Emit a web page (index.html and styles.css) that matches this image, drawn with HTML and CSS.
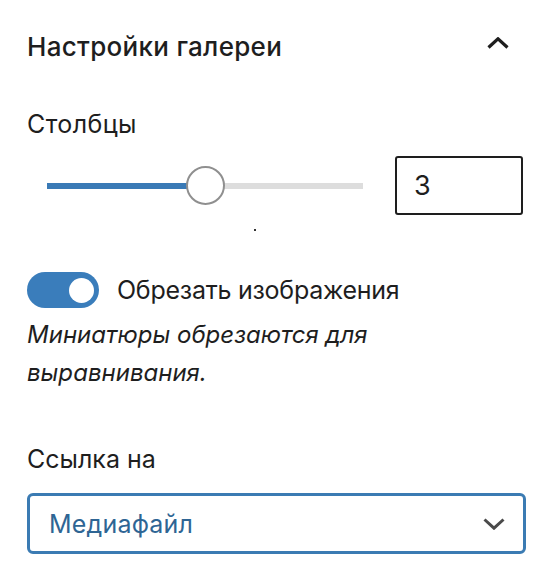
FILE: index.html
```html
<!DOCTYPE html>
<html lang="ru">
<head>
<meta charset="utf-8">
<link rel="stylesheet" href="styles.css">
</head>
<body>
<div class="panel">
  <div class="header">
    <div class="title">Настройки галереи</div>
    <svg class="chev-up" width="22" height="12" viewBox="0 0 22 12"><polyline points="1.5,10.5 11,1.8 20.5,10.5" fill="none" stroke="#1e1e1e" stroke-width="3.2"/></svg>
  </div>
  <div class="label cols-label">Столбцы</div>
  <div class="range-row">
    <div class="range">
      <div class="track">
        <div class="fill" style="width: 50%"></div>
        <div class="thumb" style="left: 50%"></div>
      </div>
      <div class="tick"></div>
    </div>
    <div class="num">3</div>
  </div>
  <div class="toggle-row">
    <div class="toggle"><div class="knob"></div></div>
    <div class="label toggle-label">Обрезать изображения</div>
  </div>
  <div class="help">Миниатюры обрезаются для выравнивания.</div>
  <div class="label link-label">Ссылка на</div>
  <div class="select">
    <span class="select-text">Медиафайл</span>
    <svg class="chev-down" width="22" height="12" viewBox="0 0 22 12"><polyline points="1.5,1.5 11,10.2 20.5,1.5" fill="none" stroke="#4a4a4a" stroke-width="3"/></svg>
  </div>
</div>
</body>
</html>
```
FILE: styles.css
```css
html, body {
  margin: 0;
  background: #ffffff;
}
.panel {
  font-family: Inter, "Noto Sans", sans-serif;
  color: #1e1e1e;
  padding: 32px 27px 0 27px;
}
.header {
  display: flex;
  justify-content: space-between;
  align-items: flex-start;
}
.title {
  font-size: 26px;
  font-weight: 500;
  line-height: 30px;
  letter-spacing: 0.3px;
}
.chev-up {
  margin-top: 5px;
  margin-right: 17px;
}
.label {
  font-size: 25px;
  line-height: 30px;
}
.cols-label {
  margin-top: 47px;
  letter-spacing: 0.4px;
}
.range-row {
  display: flex;
  align-items: center;
  margin-top: 17px;
  height: 59px;
}
.range {
  position: relative;
  width: 316px;
  padding: 0 12px 0 20px;
  height: 59px;
  display: flex;
  align-items: center;
}
.track {
  position: relative;
  width: 100%;
  height: 6px;
  background: #dddddd;
}
.fill {
  height: 100%;
  background: #3a7ab6;
}
.thumb {
  position: absolute;
  top: 50%;
  width: 35px;
  height: 35px;
  margin-left: -19.5px;
  margin-top: -19.5px;
  border: 2px solid #8f8f8f;
  border-radius: 50%;
  background: #ffffff;
}
.tick {
  position: absolute;
  left: 227px;
  top: 73px;
  width: 2px;
  height: 2px;
  background: #333333;
}
.num {
  margin-left: 20px;
  width: 128px;
  height: 59px;
  box-sizing: border-box;
  border: 2px solid #1e1e1e;
  border-radius: 3px;
  font-size: 27px;
  line-height: 55px;
  padding-left: 17px;
}
.toggle-row {
  display: flex;
  align-items: center;
  gap: 18px;
  margin-top: 57px;
}
.toggle-label {
  letter-spacing: -0.25px;
}
.toggle {
  width: 72px;
  height: 36px;
  border-radius: 18px;
  background: #3a7dbb;
  display: flex;
  align-items: center;
  justify-content: flex-end;
  padding-right: 5px;
  box-sizing: border-box;
}
.knob {
  width: 25px;
  height: 25px;
  border-radius: 50%;
  background: #ffffff;
}
.help {
  margin-top: 8px;
  font-size: 24px;
  line-height: 38px;
  font-style: italic;
  width: 380px;
}
.link-label {
  margin-top: 52px;
}
.select {
  margin-top: 19px;
  height: 61px;
  box-sizing: border-box;
  border: 3px solid #3b7bb3;
  border-radius: 6px;
  display: flex;
  align-items: center;
  justify-content: space-between;
  padding: 0 18px 0 19px;
}
.select-text {
  font-size: 25px;
  line-height: 30px;
  color: #2e6594;
  letter-spacing: 0.2px;
}
```
